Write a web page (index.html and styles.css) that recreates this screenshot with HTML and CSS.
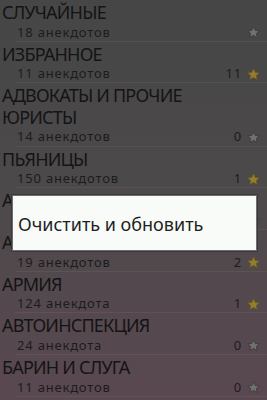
FILE: index.html
```html
<!DOCTYPE html>
<html lang="ru">
<head>
<meta charset="utf-8">
<title>Анекдоты</title>
<link rel="stylesheet" href="styles.css">
</head>
<body>
<svg width="0" height="0" class="defs">
  <defs>
    <polygon id="star" points="6.5,0.8 8.3,4.5 12.3,4.9 9.3,7.6 10.2,11.5 6.5,9.4 2.8,11.5 3.7,7.6 0.7,4.9 4.7,4.5"/>
  </defs>
</svg>
<ul class="list">
  <li class="row">
    <div class="title">СЛУЧАЙНЫЕ</div>
    <div class="sub"><span class="count-text">18 анекдотов</span><span class="fav"><svg class="star off" viewBox="0 0 13 12"><use href="#star"/></svg></span></div>
  </li>
  <li class="row">
    <div class="title">ИЗБРАННОЕ</div>
    <div class="sub"><span class="count-text">11 анекдотов</span><span class="fav">11 <svg class="star on" viewBox="0 0 13 12"><use href="#star"/></svg></span></div>
  </li>
  <li class="row">
    <div class="title">АДВОКАТЫ И ПРОЧИЕ ЮРИСТЫ</div>
    <div class="sub"><span class="count-text">14 анекдотов</span><span class="fav">0 <svg class="star off" viewBox="0 0 13 12"><use href="#star"/></svg></span></div>
  </li>
  <li class="row">
    <div class="title">ПЬЯНИЦЫ</div>
    <div class="sub"><span class="count-text">150 анекдотов</span><span class="fav">1 <svg class="star on" viewBox="0 0 13 12"><use href="#star"/></svg></span></div>
  </li>
  <li class="row">
    <div class="title">АЗИАТЫ</div>
    <div class="sub"><span class="count-text">32 анекдота</span><span class="fav">0 <svg class="star off" viewBox="0 0 13 12"><use href="#star"/></svg></span></div>
  </li>
  <li class="row">
    <div class="title">АКТЁРЫ</div>
    <div class="sub"><span class="count-text">19 анекдотов</span><span class="fav">2 <svg class="star on" viewBox="0 0 13 12"><use href="#star"/></svg></span></div>
  </li>
  <li class="row">
    <div class="title">АРМИЯ</div>
    <div class="sub"><span class="count-text">124 анекдота</span><span class="fav">1 <svg class="star on" viewBox="0 0 13 12"><use href="#star"/></svg></span></div>
  </li>
  <li class="row">
    <div class="title">АВТОИНСПЕКЦИЯ</div>
    <div class="sub"><span class="count-text">24 анекдота</span><span class="fav">0 <svg class="star off" viewBox="0 0 13 12"><use href="#star"/></svg></span></div>
  </li>
  <li class="row">
    <div class="title">БАРИН И СЛУГА</div>
    <div class="sub"><span class="count-text">11 анекдотов</span><span class="fav">0 <svg class="star off" viewBox="0 0 13 12"><use href="#star"/></svg></span></div>
  </li>
</ul>
<div class="menu">
  <div class="menu-item">Очистить и обновить</div>
</div>
</body>
</html>
```
FILE: styles.css
```css
html, body {
  margin: 0;
  padding: 0;
  height: 400px;
  overflow: hidden;
}
body {
  background: linear-gradient(to bottom, #464646 0%, #4c494a 45%, #5a4851 100%);
  font-family: "Noto Sans", "Open Sans", sans-serif;
  color: #141414;
  width: 267px;
  position: relative;
}
.defs {
  position: absolute;
}
.list {
  list-style: none;
  margin: 0;
  padding: 0;
}
.row {
  padding-top: 2px;
}
.title {
  font-size: 18px;
  letter-spacing: -0.8px;
  line-height: 21.5px;
  padding-left: 2px;
  padding-right: 10px;
}
.sub {
  display: flex;
  justify-content: space-between;
  align-items: center;
  margin-left: 15px;
  height: 17.2px;
  border-bottom: 1px solid rgba(255, 255, 255, 0.06);
  font-size: 13px;
  letter-spacing: 0.8px;
  line-height: 17px;
  color: #1c1c1c;
  padding-right: 7px;
}
.count-text {
  padding-left: 2px;
}
.fav {
  display: flex;
  align-items: center;
  gap: 5px;
}
.star {
  width: 13px;
  height: 12px;
  display: block;
}
.star.on {
  fill: #947d2e;
  stroke: #6a5820;
  stroke-width: 0.7;
}
.star.off {
  fill: #727070;
  stroke: #3e3c3d;
  stroke-width: 0.9;
}
.menu {
  position: absolute;
  left: 12px;
  top: 195px;
  width: 243px;
  height: 54px;
  background: #f8fbf8;
  border: 1px solid #6e6e6e;
  box-shadow: 0 0 0 1px #3a3a3a;
  display: flex;
  align-items: center;
}
.menu-item {
  padding-left: 5px;
  padding-top: 2px;
  font-size: 18px;
  color: #1e1e1e;
}
```
